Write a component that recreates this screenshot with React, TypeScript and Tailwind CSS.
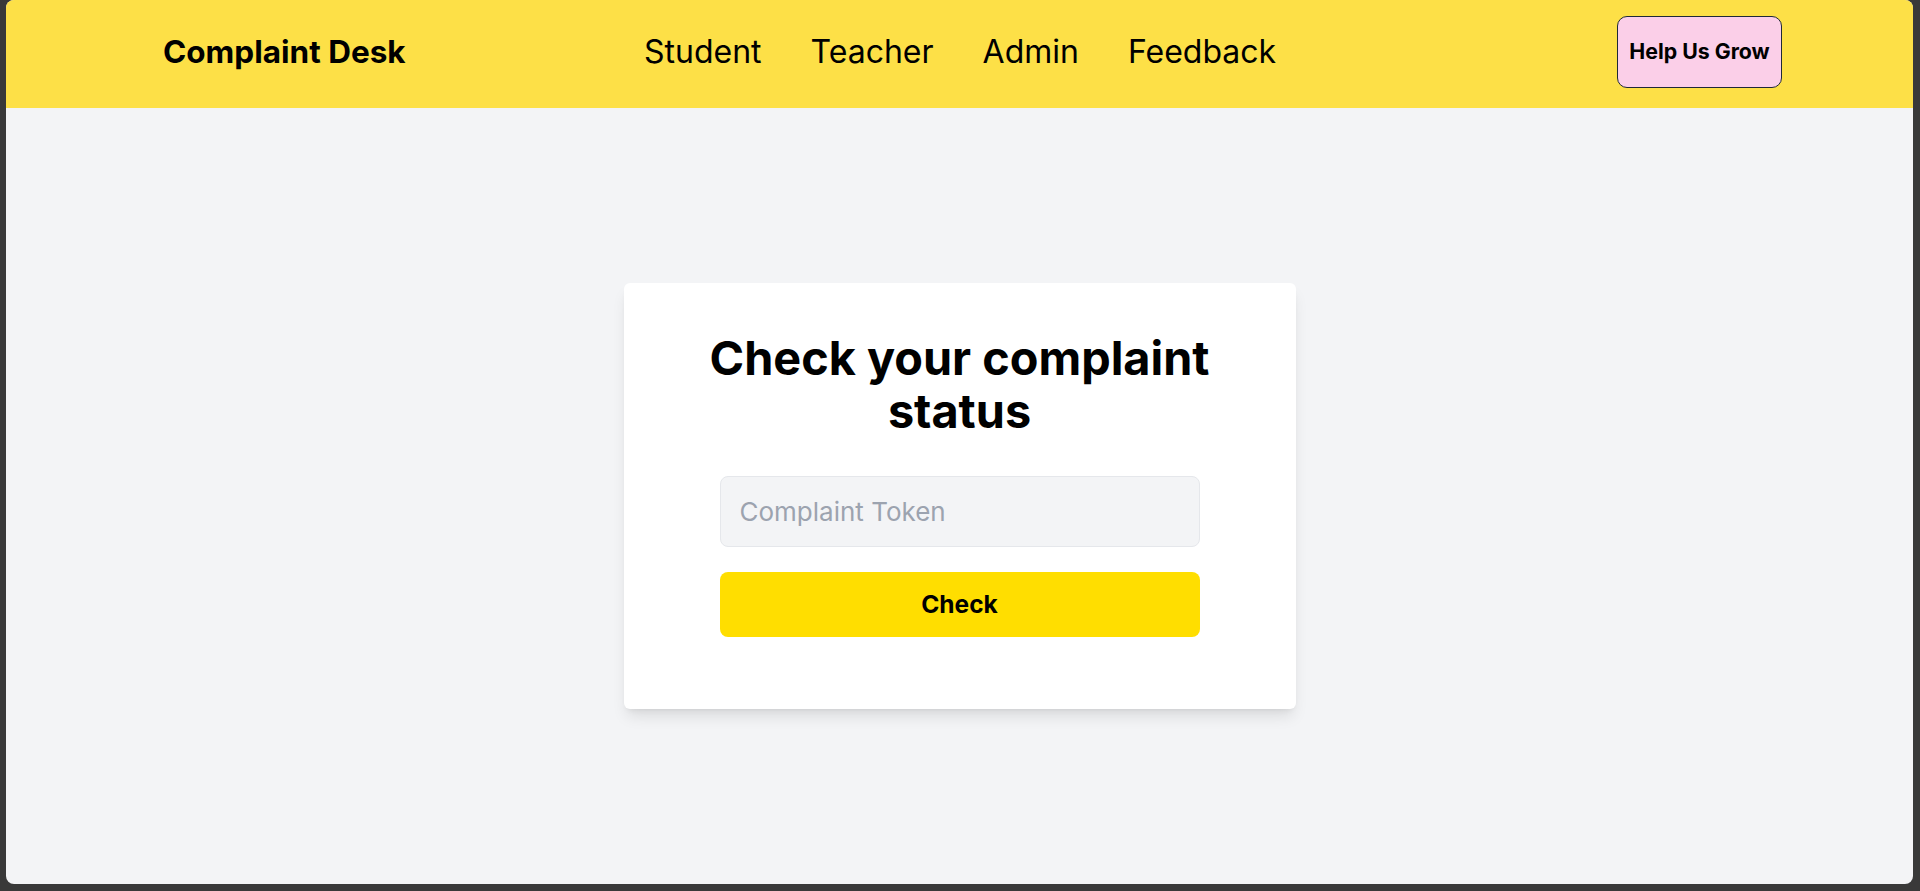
import React from "react";

export default function App() {
  const font = { fontFamily: "Inter, 'Noto Sans', sans-serif" };
  return (
    <div className="w-full h-[891px] bg-[#393939] pl-[6px] pr-[7px] pb-[7px]" style={font}>
      <div className="w-full h-full rounded-[8px] overflow-hidden bg-[#F3F4F6] flex flex-col">
        <header className="h-[108px] shrink-0 bg-[#FDE047] flex items-center pl-[157px] pr-[131px] pb-[5px]">
          <div className="w-[481px] shrink-0">
            <span className="text-[31.5px] font-bold text-black">Complaint Desk</span>
          </div>
          <nav className="flex items-center gap-[49px] text-[32px] text-black">
            <a className="cursor-pointer">Student</a>
            <a className="cursor-pointer">Teacher</a>
            <a className="cursor-pointer">Admin</a>
            <a className="cursor-pointer">Feedback</a>
          </nav>
          <button className="ml-auto w-[165px] h-[72px] rounded-[10px] border border-[#1f2937] bg-[#FBCFE8] text-[21.3px] font-bold text-black">
            Help Us Grow
          </button>
        </header>
        <main className="flex-1 flex items-center justify-center">
          <div className="w-[672px] bg-white rounded-[6px] shadow-lg pt-[49px] px-[50px] pb-[72px] flex flex-col items-center">
            <h1 className="w-full text-[46.8px] leading-[53px] font-bold text-black text-center mb-[38px]">
              Check your complaint status
            </h1>
            <input
              placeholder="Complaint Token"
              className="w-[480px] h-[71px] bg-[#F3F4F6] border border-[#E5E7EB] rounded-[8px] px-[19px] text-[26px] placeholder:text-[#9CA3AF] outline-none"
            />
            <button className="mt-[25px] w-[480px] h-[65px] bg-[#FFDE00] rounded-[8px] text-[24.5px] font-bold text-black">
              Check
            </button>
          </div>
        </main>
      </div>
    </div>
  );
}
